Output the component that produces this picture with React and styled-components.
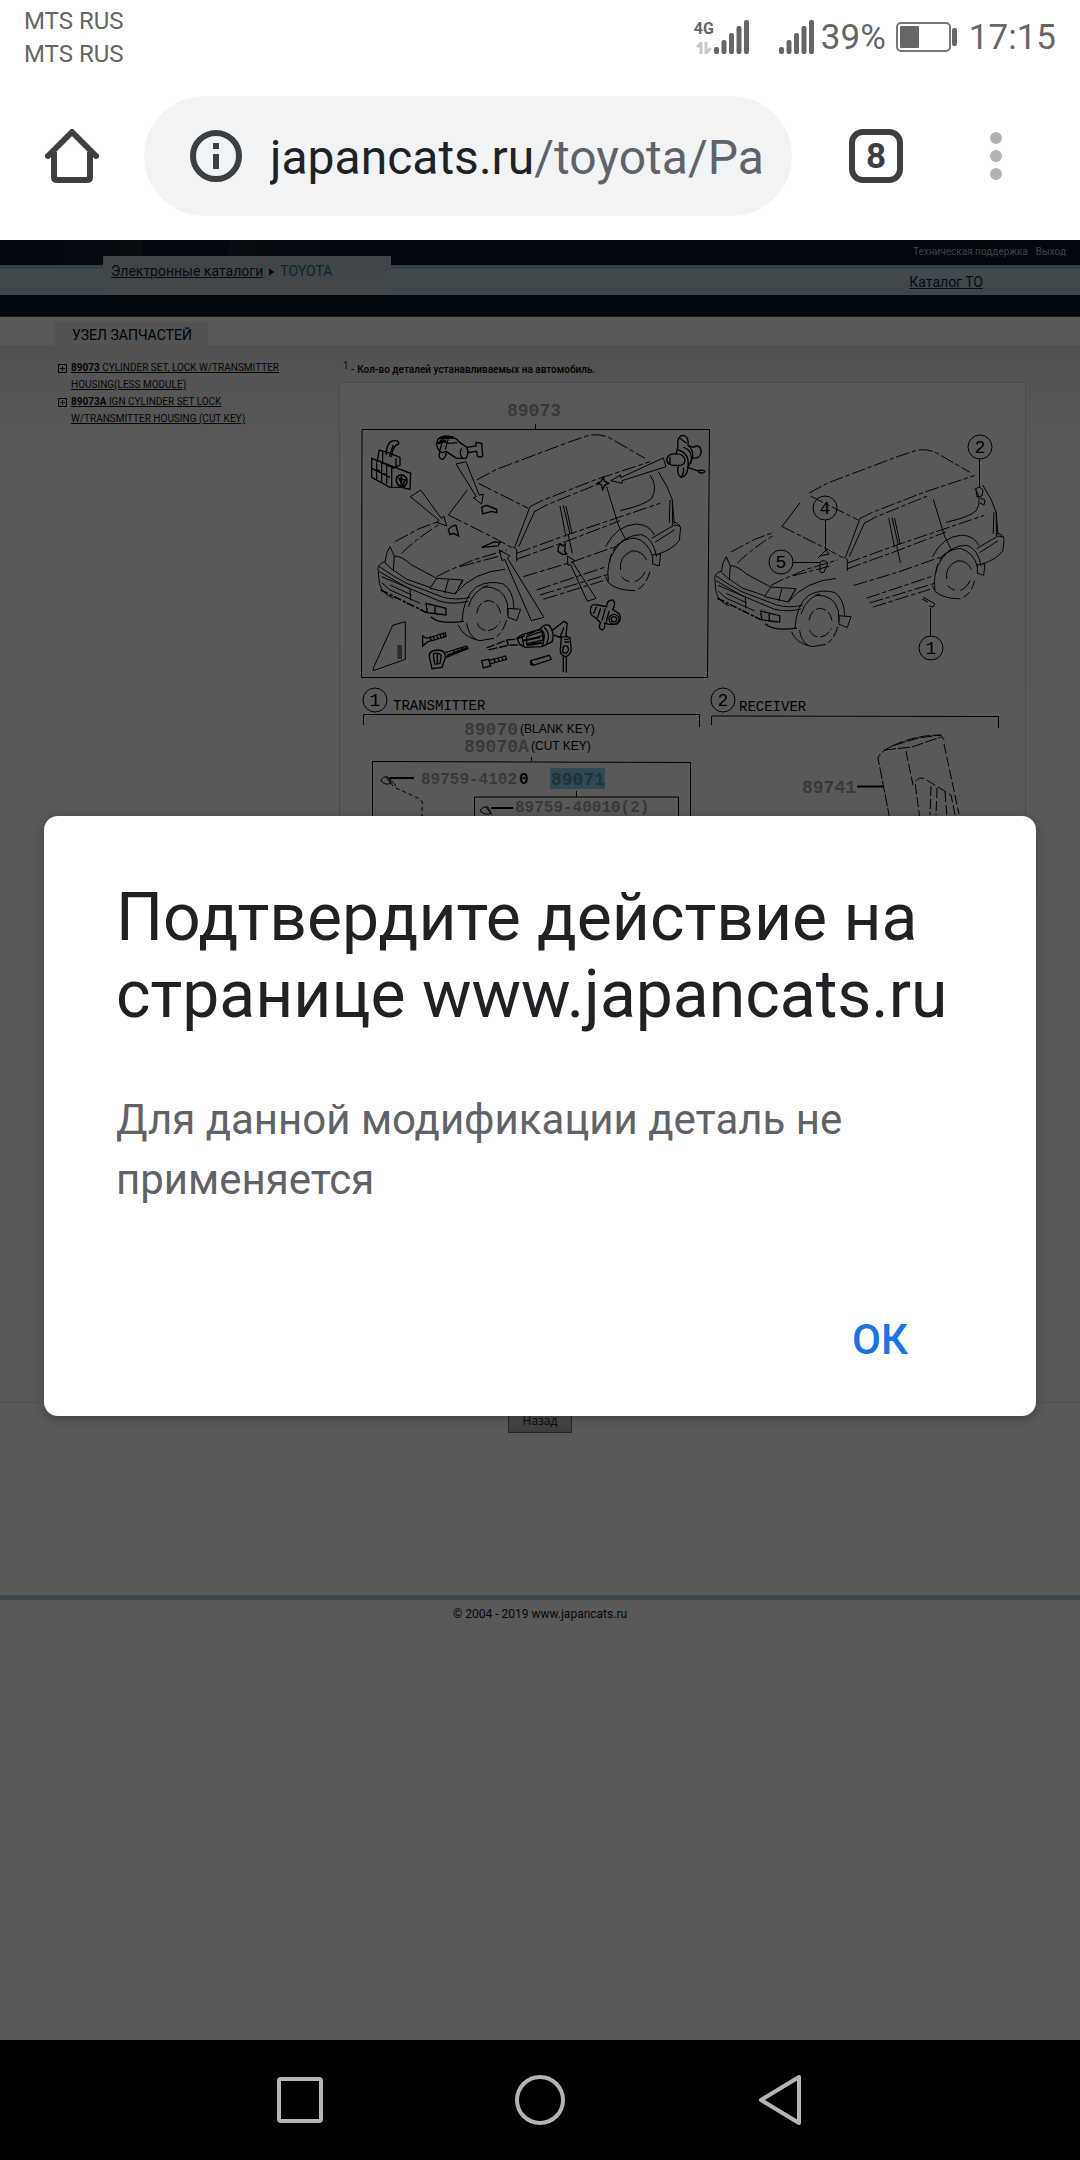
import React from "react";
import styled, { createGlobalStyle } from "styled-components";

const GlobalStyle = createGlobalStyle`
  * {
    box-sizing: border-box;
  }

  body {
    margin: 0;
    background: #fff;
    font-family: Roboto, "Liberation Sans", sans-serif;
  }

  h1, h2, p, ul {
    margin: 0;
    padding: 0;
    font-weight: 400;
  }

  svg {
    display: block;
    flex: none;
  }
`;

const Screen = styled.div`
  display: flex;
  flex-direction: column;
  min-height: 100vh;
`;

const StatusBar = styled.div`
  display: flex;
  justify-content: space-between;
  height: 72px;
  padding: 0 24px;
  color: #666;
`;

const Carriers = styled.div`
  padding-top: 5px;
  font-size: 24px;
  line-height: 33px;
`;

const StatusIcons = styled.div`
  display: flex;
  align-items: center;
  padding-top: 2px;
  font-size: 35px;
`;

const Network = styled.div`
  display: flex;
  flex-direction: column;
  align-items: center;
  gap: 4px;
  font-size: 16px;
  font-weight: 700;
  line-height: 18px;
`;

const Signal = styled.svg`
  margin-right: ${(props) => (props.$spaced ? "30px" : "7px")};
`;

const Battery = styled.svg`
  margin: 0 12px 0 10px;
`;

const Toolbar = styled.header`
  display: flex;
  align-items: center;
  height: 168px;
  padding-right: 48px;
`;

const ToolButton = styled.button`
  display: flex;
  align-items: center;
  justify-content: center;
  width: ${(props) => props.$width};
  height: 120px;
  padding: 0;
  border: 0;
  background: none;
`;

const AddressBar = styled.div`
  display: flex;
  flex: 1;
  min-width: 0;
  align-items: center;
  gap: 28px;
  height: 120px;
  padding: 0 28px 0 46px;
  border-radius: 60px;
  background: #f1f3f5;
`;

const Url = styled.a`
  overflow: hidden;
  padding-top: 3px;
  color: #5f6368;
  font-size: 48px;
  line-height: 60px;
  text-decoration: none;
  white-space: nowrap;

  strong {
    color: #202124;
    font-weight: 400;
  }
`;

const TabCount = styled.span`
  display: flex;
  align-items: center;
  justify-content: center;
  width: 54px;
  height: 54px;
  border: 6px solid #3c4043;
  border-radius: 14px;
  color: #3c4043;
  font-family: Roboto, sans-serif;
  font-size: 35px;
  font-weight: 700;
`;

const Page = styled.main`
  position: relative;
  flex: 1;
  background: #fff;
`;

const TopLinks = styled.div`
  display: flex;
  justify-content: flex-end;
  gap: 8px;
  height: 25px;
  padding: 5px 14px 0 0;
  background: linear-gradient(100deg, #07142b 10%, #1e2632 26%, #07142b 27%, #07142b 42%, #1e2632 43%, #07142b 62%) 0 0 / 540px 100% no-repeat #07142b;

  a {
    color: #b4bcc4;
    font-size: 10px;
    line-height: 14px;
    text-decoration: none;
  }
`;

const NavStripe = styled.nav`
  display: flex;
  align-items: flex-end;
  justify-content: space-between;
  height: 30px;
  padding: 0 97px 0 103px;
  border-top: 4px solid #8ab8c4;
  background: linear-gradient(#c0d2de, #b8ccd8 60%, #b4c8d0);
  font-size: 14px;
  line-height: 20px;

  > a {
    color: #06283c;
    padding-bottom: 3px;
  }
`;

const Breadcrumb = styled.div`
  display: flex;
  align-items: flex-start;
  gap: 6px;
  width: 288px;
  height: 39px;
  padding: 5px 8px;
  background: linear-gradient(#b7c4cc, #bccdd6);
  color: #2b6a8c;

  a {
    color: #10243a;
  }

  svg {
    margin-top: 7px;
  }
`;

const NavyBar = styled.div`
  height: 22px;
  border-bottom: 1px solid #555;
  background: #03192c;
`;

const HeadingRow = styled.div`
  display: flex;
  align-items: flex-end;
  height: 28px;
  padding-left: 54px;
  background: #fff;
`;

const Heading = styled.h2`
  width: 154px;
  padding: 3px 0 0 18px;
  background: #eeeeee;
  color: #000;
  font-size: 14px;
  line-height: 20px;
`;

const Content = styled.div`
  display: grid;
  grid-template-columns: 270px 1fr;
  gap: 11px;
  padding: 14px 54px 18px 58px;
  border-bottom: 1px solid #e4e4e4;
  background: linear-gradient(#eaeaea, #fdfdfd 100px, #fff);
`;

const PartsTree = styled.ul`
  list-style: none;

  li {
    display: flex;
    gap: 4px;
    font-size: 10px;
    line-height: 17px;
  }

  svg {
    margin-top: 5px;
  }

  a {
    color: #111;
    width: 220px;
  }
`;

const Footnote = styled.p`
  height: 23px;
  padding: 3px 0 0 4px;
  color: #111;
  font-size: 10px;
  font-weight: 600;
  line-height: 16px;

  sup {
    font-size: 10px;
    font-weight: 400;
    line-height: 0;
  }
`;

const DiagramCard = styled.div`
  border: 1px solid #cfe0e4;
  background: #fff;
`;

const BackRow = styled.div`
  display: flex;
  justify-content: center;
  height: 192px;
  padding-top: 6px;
`;

const BackButton = styled.button`
  width: 64px;
  height: 24px;
  padding: 0;
  border: 1px solid #777;
  background: linear-gradient(#eee, #aaa);
  color: #222;
  font-family: "Open Sans", sans-serif;
  font-size: 12px;
  line-height: 20px;
`;

const Footer = styled.footer`
  padding-top: 6px;
  border-top: 5px solid #a9c9d8;
  color: #111;
  font-size: 12px;
  line-height: 16px;
  text-align: center;
`;

const Scrim = styled.div`
  position: absolute;
  inset: 0;
  display: flex;
  align-items: center;
  justify-content: center;
  padding: 0 44px 48px;
  background: rgba(0, 0, 0, 0.65);
`;

const Dialog = styled.section`
  display: flex;
  flex: 1;
  flex-direction: column;
  padding: 63px 72px 46px;
  border-radius: 14px;
  background: #fff;
  box-shadow: 0 2px 10px rgba(0, 0, 0, 0.3);

  h1 {
    color: #202124;
    font-size: 66px;
    line-height: 77px;
  }

  p {
    margin-top: 57px;
    color: #5f6368;
    font-size: 42px;
    line-height: 60px;
  }
`;

const OkButton = styled.button`
  align-self: flex-end;
  margin-top: 100px;
  padding: 0 56px;
  border: 0;
  background: none;
  color: #1a73e8;
  font-family: inherit;
  font-size: 42px;
  font-weight: 500;
  line-height: 60px;
`;

const SystemNav = styled.nav`
  display: flex;
  align-items: center;
  justify-content: center;
  height: 120px;
  background: #000;
`;

const Drawing = styled.svg`
  width: 100%;
  height: auto;
  fill: none;
  stroke: #000;
  stroke-width: 1;

  text {
    stroke: none;
    fill: #000;
    font-family: "Liberation Mono", monospace;
    font-size: 14px;
  }

  .part {
    fill: #a4a4a4;
    font-size: 18px;
    font-weight: 700;
  }

  .long {
    font-size: 16px;
  }

  .picked {
    fill: #5f8ea2;
  }

  .dark {
    fill: #000;
  }

  .note {
    font-family: "Liberation Sans", sans-serif;
    font-size: 12px;
  }

  .mark {
    font-size: 18px;
  }
`;

const SignalBars = ({ spaced }) => (
  <Signal $spaced={spaced} width="35" height="34" viewBox="0 0 35 34" aria-hidden="true">
    {[7, 14, 21, 28, 34].map((height, index) => (
      <rect key={height} x={index * 7.5} y={34 - height} width="5" height={height} rx="2" fill="#666" />
    ))}
  </Signal>
);

const Car = () => (
  <g strokeWidth="3">
    <g strokeDasharray="44 8 14 8">
      <path d="M410 270L470 238L690 155L750 135Q790 130 820 150L915 205" />
      <path d="M415 280L565 355M325 375L455 440L520 475M165 455L240 415L300 393M185 490Q230 445 300 402" />
      <path d="M570 350L610 330L770 268L930 215M585 364L620 345L780 280" />
      <path d="M530 490L680 435L960 340M530 508L690 450L840 392" />
      <path d="M550 560L690 518L820 472M590 600L800 530M600 615L805 553M610 628L790 572" />
      <path d="M290 560L330 540L400 510L500 480M360 530L480 498" />
    </g>
    <path d="M325 375L382 300M570 350L525 470M585 362L536 470M518 470L530 478L530 515" />
    <path d="M660 348L678 440M670 346L690 432M678 348L696 430M685 435L697 490M800 290L835 405L855 445" />
    <path d="M930 255Q955 290 935 325Q915 345 840 362M955 245Q985 290 997 330L1003 400M990 330L988 398M997 330L998 405" />
    <path d="M805 575Q798 515 825 480Q855 433 905 434Q940 445 950 500M797 470Q830 405 890 402Q930 405 943 435" />
    <path d="M820 475Q850 445 885 444Q925 455 938 500M938 495L962 492L958 528L938 522zM797 560L805 578Q830 602 885 602" />
    <path d="M1000 396Q1020 400 1022 415L1018 452Q995 480 955 492M935 445L1003 405M945 457L1003 420M1003 405L1020 408" />
    <path d="M875 483Q905 480 920 510M842 540Q836 500 875 483M868 575Q850 570 845 560M915 545Q905 568 885 575" />
    <path d="M808 520Q812 470 860 445M930 545Q918 585 895 597" strokeDasharray="30 9" />
    <path d="M150 470L140 490L135 518L160 542L163 498zM163 498Q185 498 215 525L290 565M160 540L200 568L270 592" />
    <path d="M290 565L368 570L345 612L270 595zM325 570L314 610M370 570L345 612" />
    <path d="M135 515Q116 520 114 535L118 580Q125 610 160 625M118 530Q160 560 200 580L310 622Q350 632 390 622" />
    <path d="M118 545L200 592L300 634Q340 645 385 634M125 560L210 596L212 632M125 578L150 600L240 640M150 585L215 615" />
    <path d="M122 600L260 668" strokeWidth="5" strokeDasharray="24 6 10 4" />
    <path d="M272 680Q300 705 372 694M258 640L318 655L318 675L262 668zM285 650L285 672L312 674" strokeWidth="4" />
    <path d="M345 612Q400 545 495 538M366 694Q370 620 410 590Q450 570 490 582Q520 600 522 655M385 650Q400 600 445 586" />
    <path d="M355 705Q368 742 420 752L462 745M380 700Q385 735 410 750M430 590Q490 590 502 640L504 675M504 655L542 658L530 692L504 682z" />
    <path d="M410 670Q415 635 445 632Q475 635 482 670M412 700Q420 722 445 722Q470 718 480 695M500 690Q490 725 470 740" strokeDasharray="34 8" />
  </g>
);

const Callout = ({ x, y, label }) => (
  <g>
    <circle cx={x} cy={y} r="12" />
    <text className="mark" x={x} y={y + 6} textAnchor="middle">
      {label}
    </text>
  </g>
);

const PartsDiagram = () => (
  <Drawing viewBox="340 383 685 1000" role="img" aria-label="89073">
    <text className="part" x="507" y="416">89073</text>
    <path d="M535.5 424V429M362 429.5H709.5L707.5 677.5H361.5z" />

    <g transform="translate(340 390) scale(0.3333)">
      <Car />
      <g strokeWidth="3">
        <path d="M348 222L378 215L418 316L430 312L425 342L400 324L409 320zM211 320L242 300L304 385L312 379L320 408L290 397L297 391z" />
        <path d="M812 272L842 255L842 263L970 204L978 230L846 272L847 280zM682 498L704 512L698 517L768 625L742 634L692 524L684 526z" />
        <path d="M478 480L510 498L502 504L612 682L574 692L494 508L486 512z" />
      </g>
      {/* lock body and switch, top left */}
      <g strokeWidth="4">
        <path d="M95 205L118 214L212 250L210 298L186 292L150 292L95 262zM118 180L112 210L160 235L180 225L180 202L145 188zM138 195Q140 155 160 152Q178 150 176 162Q158 165 154 202" />
        <path d="M95 235L150 262M110 212V268M125 218V275M140 225V282M155 235V292M160 165L148 200M128 185V222M168 205V230M112 240L120 243M130 250L138 254" />
        <path d="M170 262Q185 245 200 265Q205 288 186 290Q165 285 170 262zM178 266L196 270L188 286zM184 258V290" strokeWidth="5" />
        <path d="M290 165Q288 142 315 138Q345 138 360 158L378 170Q390 185 378 205L350 205L318 184Q298 195 290 165zM300 150L325 160L352 158M310 145L300 180M325 145L316 178" />
        <path d="M380 172L408 168V157L425 160L428 198Q420 205 412 198L410 184L384 188M300 185Q292 205 308 208Q320 200 318 188M365 175Q355 190 368 205" />
        <path d="M300 144L340 142M292 160L318 152" strokeWidth="8" />
        {/* rear door cylinder */}
        <path d="M1014 170Q1010 138 1030 136Q1048 140 1044 166L1060 172Q1080 160 1084 185Q1080 208 1058 204L1044 232Q1042 262 1022 262Q1008 250 1016 226Q982 230 980 208Q985 190 1008 192z" />
        <path d="M1020 145L1040 160M1008 192Q1030 190 1035 210Q1034 228 1016 226M1015 180Q1050 190 1044 232M1030 172Q1062 180 1052 222M1044 166Q1062 180 1058 204M1022 262Q1034 250 1030 232M990 200V222" />
        <path d="M1042 232L1072 242Q1096 238 1094 246Q1080 254 1072 242" />
        {/* front door cylinder */}
        <path d="M752 655Q755 640 772 645L800 650Q800 630 818 630Q830 640 818 658L838 672Q846 690 832 702L812 704L794 700Q796 718 786 720Q772 714 782 698L765 682Q748 675 752 655z" />
        <path d="M770 650L760 672M782 655L772 685M796 655L786 692M808 662L798 698" />
        <circle cx="822" cy="688" r="15" />
        <circle cx="822" cy="688" r="8" />
      </g>
      {/* small parts placed on the body */}
      <g strokeWidth="4">
        <path d="M425 352L440 346L470 358V368L455 364L428 372zM325 420Q335 405 348 406L356 438L340 430L330 434zM425 472L462 456L480 458L474 468zM790 262L794 274L806 280L794 286L788 300L784 284L772 280L784 274z" />
        <path d="M655 470L662 462L668 468L676 462L674 484L680 492L668 494L654 484z" />
      </g>
      {/* plate, screws, keys and ignition lock */}
      <g strokeWidth="3">
        <path d="M158 706L196 695V808L100 842Q98 838 102 830z" />
        <path d="M172 768H186M172 774H186M172 780H186M172 786H186M172 792H186M172 798H186M172 804H186" />
      </g>
      <g strokeWidth="4">
        <path d="M248 738L260 745L316 728L318 740L262 756L248 768zM270 743L274 752M280 740L284 750M290 737L294 747M300 734L304 744M310 731L312 741" />
        <path d="M268 800Q266 780 296 780Q318 782 316 804L306 832L276 836zM280 792Q292 785 304 796L300 820L284 822zM316 788L380 768L384 776L318 802M320 796L380 774M292 790V825" />
        <path d="M340 781L346 790M352 778L358 786M364 774L370 782" />
        <path d="M425 812L446 808L452 828L430 834zM446 812L496 798L500 808L450 822M462 808L466 818M474 804L478 815M486 801L490 812" />
        <path d="M572 812L628 796L634 808L580 826zM572 812V822L580 826M590 808L616 800" />
        <path d="M440 774L500 750L530 748L600 718M446 780L505 766L545 764M500 750L505 766" strokeDasharray="26 6" />
        <path d="M530 745L545 735L600 718Q612 700 628 706Q646 730 636 756L606 770L556 772L540 764zM545 735L552 770M560 740L606 724L610 750L560 762zM600 718Q622 725 606 770M612 712Q634 730 620 762M565 750L605 738" />
        <path d="M550 752L600 742M560 766L606 758" strokeWidth="6" />
        <path d="M636 722L672 694L682 700L678 735L684 742M640 735L660 742L672 712M664 742Q668 738 690 742L694 780Q690 798 676 800Q656 794 662 770zM670 770Q684 762 686 780Q678 796 668 786zM670 800V846M679 800V848M673 748H686M673 756H688" />
      </g>
    </g>

    <g transform="translate(678.37 406.97) scale(0.3187)">
      <Car />
    </g>
    <path d="M825.5 520V550M793 562.5H820M979.5 459V487M930.5 608V636" />
    <path d="M818 558L826 550L829 554L820 556M820 562Q824 559 828 563L824 572Q819 575 820 568zM976 489Q979 485 983 490L982 496L977 497zM980 498L985 500L984 505L980 503M923 597L930 601L935 604L933 607L929 606M922 599L928 602" />
    <Callout x={825} y={508} label="4" />
    <Callout x={781} y={562} label="5" />
    <Callout x={980} y={447} label="2" />
    <Callout x={931} y={648} label="1" />

    <Callout x={375} y={700} label="1" />
    <text x="393" y="710">TRANSMITTER</text>
    <path d="M363.5 725V714.5H699.5V727M711.5 725V716L998.5 716.5V728" />
    <Callout x={723} y={700} label="2" />
    <text x="739" y="711">RECEIVER</text>

    <text className="part" x="464" y="735">89070</text>
    <text className="note" x="520" y="733">(BLANK KEY)</text>
    <text className="part" x="464" y="752">89070A</text>
    <text className="note" x="531" y="750">(CUT KEY)</text>
    <path d="M531.5 757V761M372.5 900V761.5L690.5 762.5V900M474.5 900V797H678.5V900M576.5 791V797" />
    <rect x="550" y="768" width="55" height="21" fill="#86d0f0" stroke="none" />
    <text className="part long" x="421" y="784">89759-4102</text>
    <text className="part long dark" x="519" y="784">0</text>
    <text className="part picked" x="551" y="785">89071</text>
    <text className="part long" x="515" y="812">89759-40010(2)</text>
    <path d="M390 778H414M491 808H513M857 786.5H884" strokeWidth="2" />
    <path d="M381 781Q382 776 388 777L391 783Q386 786 381 781zM386 777L393 786M389 778L396 786M480 811Q482 806 488 807L491 813Q486 816 480 811zM486 807L492 815" />
    <path d="M396 788L420 799Q424 803 422 808V830" strokeDasharray="4 3" />
    <text className="part" x="802" y="793">89741</text>
    <path d="M890 820L878 758Q880 752 892 746L918 738L941 735L945 742M884 750L912 747L941 737M892 746Q915 735 941 735" strokeDasharray="12 2" />
    <path d="M906 751L913 785M944 744L959 814M920 820L915 782Q919 776 925 779L951 795L955 815L958 814M931 786L930 815M937 788L936 815M945 792L947 817" strokeDasharray="10 3" />
  </Drawing>
);

const TreeItem = ({ code, children }) => (
  <li>
    <svg width="9" height="9" viewBox="0 0 9 9" fill="none" stroke="#000">
      <path d="M0.5 0.5H8.5V8.5H0.5zM2 4.5H7M4.5 2V7" />
    </svg>
    <a href="#part">
      <strong>{code}</strong> {children}
    </a>
  </li>
);

export default function App() {
  return (
    <Screen>
      <GlobalStyle />
      <StatusBar>
        <Carriers>
          <div>MTS RUS</div>
          <div>MTS RUS</div>
        </Carriers>
        <StatusIcons>
          <Network>
            4G
            <svg width="16" height="12" viewBox="0 0 16 12" fill="none" stroke="#c8c8c8" strokeWidth="3">
              <path d="M1 5L5 1V12M10 0V11L15 6" />
            </svg>
          </Network>
          <SignalBars spaced />
          <SignalBars />
          <span>39%</span>
          <Battery width="61" height="30" viewBox="0 0 61 30" aria-hidden="true">
            <rect x="1" y="1" width="53" height="28" rx="4" fill="none" stroke="#777" strokeWidth="2" />
            <rect x="4" y="4" width="19" height="22" rx="1" fill="#666" />
            <rect x="56" y="6" width="5" height="18" rx="2" fill="#666" />
          </Battery>
          <span>17:15</span>
        </StatusIcons>
      </StatusBar>

      <Toolbar>
        <ToolButton $width="144px" aria-label="Home">
          <svg width="54" height="54" viewBox="0 0 54 54" fill="none" stroke="#3c4043" strokeWidth="6">
            <path d="M3 27L27 3L51 27" strokeLinecap="round" strokeLinejoin="round" />
            <path d="M9 23V48Q9 51 12 51H42Q45 51 45 48V23" />
          </svg>
        </ToolButton>
        <AddressBar>
          <svg width="52" height="52" viewBox="0 0 52 52">
            <circle cx="26" cy="26" r="23" fill="none" stroke="#3c4043" strokeWidth="6" />
            <path d="M23 13H29V19H23zM23 24H29V39H23z" fill="#3c4043" />
          </svg>
          <Url href="#address">
            <strong>japancats.ru</strong>/toyota/Pa
          </Url>
        </AddressBar>
        <ToolButton $width="168px" aria-label="Tabs">
          <TabCount>8</TabCount>
        </ToolButton>
        <ToolButton $width="72px" aria-label="Menu">
          <svg width="12" height="48" viewBox="0 0 12 48" fill="#b2b2b2">
            <circle cx="6" cy="6" r="6" />
            <circle cx="6" cy="24" r="6" />
            <circle cx="6" cy="42" r="6" />
          </svg>
        </ToolButton>
      </Toolbar>

      <Page>
        <TopLinks>
          <a href="#support">Техническая поддержка</a>
          <a href="#logout">Выход</a>
        </TopLinks>
        <NavStripe>
          <Breadcrumb>
            <a href="#catalogs">Электронные каталоги</a>
            <svg width="5" height="8" viewBox="0 0 5 8">
              <path d="M0 0L5 4L0 8z" fill="#111" />
            </svg>
            <span>TOYOTA</span>
          </Breadcrumb>
          <a href="#maintenance">Каталог ТО</a>
        </NavStripe>
        <NavyBar />
        <HeadingRow>
          <Heading>УЗЕЛ ЗАПЧАСТЕЙ</Heading>
        </HeadingRow>
        <Content>
          <PartsTree>
            <TreeItem code="89073">CYLINDER SET, LOCK W/TRANSMITTER HOUSING(LESS MODULE)</TreeItem>
            <TreeItem code="89073A">IGN CYLINDER SET LOCK W/TRANSMITTER HOUSING (CUT KEY)</TreeItem>
          </PartsTree>
          <div>
            <Footnote>
              <sup>1</sup> - Кол-во деталей устанавливаемых на автомобиль.
            </Footnote>
            <DiagramCard>
              <PartsDiagram />
            </DiagramCard>
          </div>
        </Content>
        <BackRow>
          <BackButton>Назад</BackButton>
        </BackRow>
        <Footer>© 2004 - 2019 www.japancats.ru</Footer>

        <Scrim>
          <Dialog role="alertdialog" aria-labelledby="dialog-title" aria-describedby="dialog-text">
            <h1 id="dialog-title">Подтвердите действие на странице www.japancats.ru</h1>
            <p id="dialog-text">Для данной модификации деталь не применяется</p>
            <OkButton>ОК</OkButton>
          </Dialog>
        </Scrim>
      </Page>

      <SystemNav>
        <ToolButton $width="240px" aria-label="Recent apps">
          <svg width="46" height="46" viewBox="0 0 46 46" fill="none" stroke="#b4b4b4" strokeWidth="4">
            <rect x="2" y="2" width="42" height="42" rx="2" />
          </svg>
        </ToolButton>
        <ToolButton $width="240px" aria-label="Home screen">
          <svg width="50" height="50" viewBox="0 0 50 50" fill="none" stroke="#b4b4b4" strokeWidth="4">
            <circle cx="25" cy="25" r="23" />
          </svg>
        </ToolButton>
        <ToolButton $width="240px" aria-label="Back">
          <svg width="44" height="50" viewBox="0 0 44 50" fill="none" stroke="#b4b4b4" strokeWidth="4">
            <path d="M41 2V48L3 25z" strokeLinejoin="round" />
          </svg>
        </ToolButton>
      </SystemNav>
    </Screen>
  );
}
